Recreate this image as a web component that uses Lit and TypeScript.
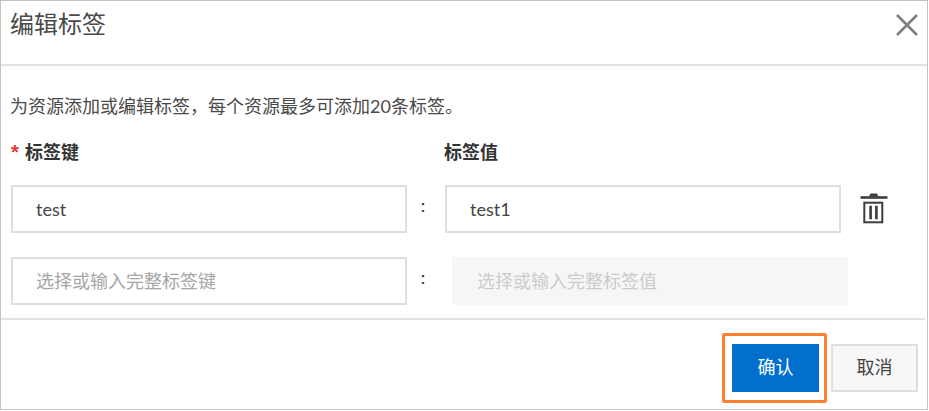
import { LitElement, html, css } from "lit";
import { customElement } from "lit/decorators.js";

@customElement("app-root")
export class AppRoot extends LitElement {
  static styles = css`
    :host {
      display: block;
      width: 929px;
      height: 411px;
      background: #fff;
      font-family: Lato, "Noto Sans CJK SC", sans-serif;
      color: #333;
    }
    * { box-sizing: border-box; }
    .dialog {
      width: 928px;
      height: 410px;
      border: 1px solid #c4c4c4;
      background: #fff;
      display: flex;
      flex-direction: column;
    }
    .header {
      height: 65px;
      flex: none;
      border-bottom: 2px solid #e3e3e3;
      display: flex;
      justify-content: space-between;
      align-items: flex-start;
      padding: 5px 8px 0 9px;
    }
    .title {
      font-size: 24px;
      line-height: 36px;
      font-weight: 400;
      color: #4a4a4a;
    }
    .close { display: block; margin-top: 7px; }
    .body {
      height: 254px;
      flex: none;
      padding: 28px 0 0 9px;
      border-bottom: 2px solid #e3e3e3;
      margin-right: 2px;
    }
    .intro {
      font-size: 18px;
      line-height: 24px;
      color: #4a4a4a;
      height: 24px;
      white-space: nowrap;
    }
    .labels {
      display: flex;
      margin-top: 22px;
      height: 24px;
      font-size: 18px;
      line-height: 24px;
      font-weight: 700;
      color: #333;
    }
    .label-key { width: 434px; display: flex; }
    .star {
      color: #e53935;
      width: 15px;
      font-family: "Liberation Sans", sans-serif;
      font-size: 20px;
      padding-left: 1px;
    }
    .row {
      display: flex;
      align-items: center;
      margin-top: 24px;
      height: 48px;
      padding-left: 1px;
    }
    .labels + .row { margin-top: 21px; }
    .field {
      width: 396px;
      height: 48px;
      flex: none;
      border: 2px solid #dedede;
      padding-left: 23px;
      font-size: 18px;
      line-height: 44px;
      color: #444;
      white-space: nowrap;
    }
    .colon {
      flex: none;
      width: 38px;
      text-align: center;
      font-size: 18px;
      line-height: 40px;
      height: 48px;
      color: #333;
      padding-right: 6px;
    }
    .colon.wide { width: 45px; padding-right: 13px; }
    .field.placeholder { color: #a6a6a6; }
    .field.disabled {
      background: #f6f6f6;
      border-color: #f6f6f6;
      color: #cccccc;
    }
    .trash { display: block; flex: none; margin-left: 19px; }
    .footer {
      flex: 1;
      display: flex;
      justify-content: flex-end;
      align-items: flex-start;
      gap: 12px;
      padding: 24px 9px 0 0;
    }
    .btn {
      width: 87px;
      height: 48px;
      font-size: 18px;
      line-height: 46px;
      text-align: center;
      position: relative;
      flex: none;
    }
    .primary { background: #0070cc; color: #fff; }
    .secondary {
      background: #f7f7f7;
      border: 2px solid #dedede;
      line-height: 42px;
      color: #444;
    }
    .mark {
      position: absolute;
      left: -10px;
      top: -11px;
      width: 105px;
      height: 70px;
      border: 3px solid #ff8033;
      border-radius: 2px;
      pointer-events: none;
    }
  `;

  render() {
    return html`
      <div class="dialog">
        <div class="header">
          <div class="title">编辑标签</div>
          <svg class="close" width="24" height="24" viewBox="0 0 24 24" aria-hidden="true">
            <path d="M2 2 L22 22 M22 2 L2 22" stroke="#7f7f7f" stroke-width="2.6" fill="none"></path>
          </svg>
        </div>
        <div class="body">
          <div class="intro">为资源添加或编辑标签，每个资源最多可添加20条标签。</div>
          <div class="labels">
            <div class="label-key"><span class="star">*</span><span>标签键</span></div>
            <div>标签值</div>
          </div>
          <div class="row">
            <div class="field">test</div>
            <div class="colon">:</div>
            <div class="field">test1</div>
            <svg class="trash" width="28" height="32" viewBox="0 0 28 32" aria-hidden="true">
              <path d="M0.5 4.5 H27.5" stroke="#3d3d3d" stroke-width="2.6" fill="none"></path>
              <path d="M9 3.5 L10.5 0.5 H17 L18.5 3.5 Z" fill="#3d3d3d"></path>
              <rect x="4.3" y="9.7" width="18" height="19.6" fill="none" stroke="#3d3d3d" stroke-width="2"></rect>
              <path d="M10.6 12.7 V26.3 M16.4 12.7 V26.3" stroke="#3d3d3d" stroke-width="2.6" fill="none"></path>
            </svg>
          </div>
          <div class="row">
            <div class="field placeholder">选择或输入完整标签键</div>
            <div class="colon wide">:</div>
            <div class="field disabled">选择或输入完整标签值</div>
          </div>
        </div>
        <div class="footer">
          <div class="btn primary">确认<span class="mark"></span></div>
          <div class="btn secondary">取消</div>
        </div>
      </div>
    `;
  }
}
